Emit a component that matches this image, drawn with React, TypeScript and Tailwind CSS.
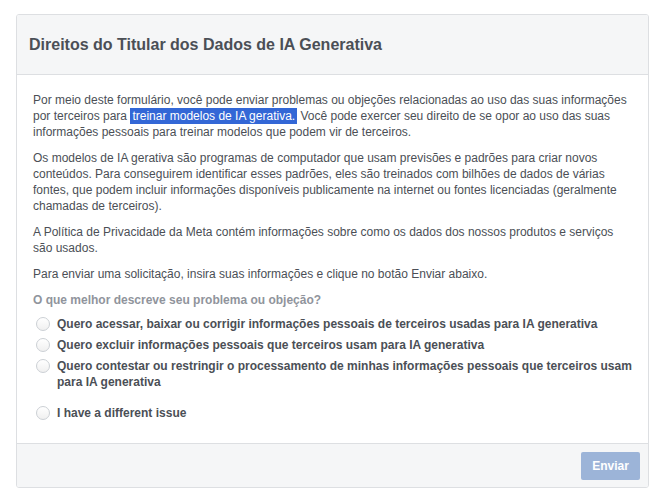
import { useState } from "react";

const options = [
  "Quero acessar, baixar ou corrigir informações pessoais de terceiros usadas para IA generativa",
  "Quero excluir informações pessoais que terceiros usam para IA generativa",
  "Quero contestar ou restringir o processamento de minhas informações pessoais que terceiros usam para IA generativa",
];

function Radio({ label, checked, onSelect, className = "" }: { label: string; checked: boolean; onSelect: () => void; className?: string }) {
  return (
    <label className={`flex items-start gap-[7px] cursor-pointer ${className}`} onClick={onSelect}>
      <span
        className={`mt-[1px] ml-[3px] w-[14px] h-[14px] rounded-full border flex-shrink-0 bg-gradient-to-b from-white to-[#f0f0f0] ${
          checked ? "border-[#4267b2]" : "border-[#ccd0d5]"
        } flex items-center justify-center`}
      >
        {checked && <span className="w-[6px] h-[6px] rounded-full bg-[#4267b2]" />}
      </span>
      <span className="font-bold text-[12px] leading-[16px] text-[#4b4f56]">{label}</span>
    </label>
  );
}

export default function App() {
  const [selected, setSelected] = useState<number | null>(null);

  return (
    <div className="min-h-screen bg-white pt-[14px] px-[16px] font-['Liberation_Sans',Arial,sans-serif]">
      <div className="w-[633px] border border-[#dddfe2] rounded-[3px] bg-white overflow-hidden">
        {/* Header */}
        <div className="h-[60px] bg-[#f5f6f7] border-b border-[#dddfe2] px-[12px] flex items-center">
          <h1 className="text-[16px] font-bold text-[#4b4f56]">Direitos do Titular dos Dados de IA Generativa</h1>
        </div>

        {/* Body */}
        <div className="px-[16px] pt-[17px] pb-[22px] text-[12px] leading-[16px] text-[#4b4f56]">
          <p className="mb-[10px]">
            Por meio deste formulário, você pode enviar problemas ou objeções relacionadas ao uso das suas informações por
            terceiros para <span className="bg-[#3367d6] text-white px-[2px] py-[1px]">treinar modelos de IA gerativa.</span> Você
            pode exercer seu direito de se opor ao uso das suas informações pessoais para treinar modelos que podem vir de
            terceiros.
          </p>
          <p className="mb-[10px]">
            Os modelos de IA gerativa são programas de computador que usam previsões e padrões para criar novos conteúdos. Para
            conseguirem identificar esses padrões, eles são treinados com bilhões de dados de várias fontes, que podem incluir
            informações disponíveis publicamente na internet ou fontes licenciadas (geralmente chamadas de terceiros).
          </p>
          <p className="mb-[10px]">
            A Política de Privacidade da Meta contém informações sobre como os dados dos nossos produtos e serviços são usados.
          </p>
          <p className="mb-[10px]">Para enviar uma solicitação, insira suas informações e clique no botão Enviar abaixo.</p>

          <div className="font-bold text-[#90949c] mb-[8px]">O que melhor descreve seu problema ou objeção?</div>

          <div className="flex flex-col gap-[5px] mr-[-12px]">
            {options.map((o, i) => (
              <Radio key={i} label={o} checked={selected === i} onSelect={() => setSelected(i)} />
            ))}
            <Radio
              label="I have a different issue"
              checked={selected === 3}
              onSelect={() => setSelected(3)}
              className="mt-[10px]"
            />
          </div>
        </div>

        {/* Footer */}
        <div className="h-[44px] bg-[#f5f6f7] border-t border-[#dddfe2] flex items-start justify-end pt-[8px] pr-[8px]">
          <button
            type="button"
            disabled={selected === null}
            className="w-[59px] h-[28px] rounded-[2px] bg-[#9cb4d8] text-white text-[12px] font-bold disabled:cursor-default"
          >
            Enviar
          </button>
        </div>
      </div>
    </div>
  );
}
